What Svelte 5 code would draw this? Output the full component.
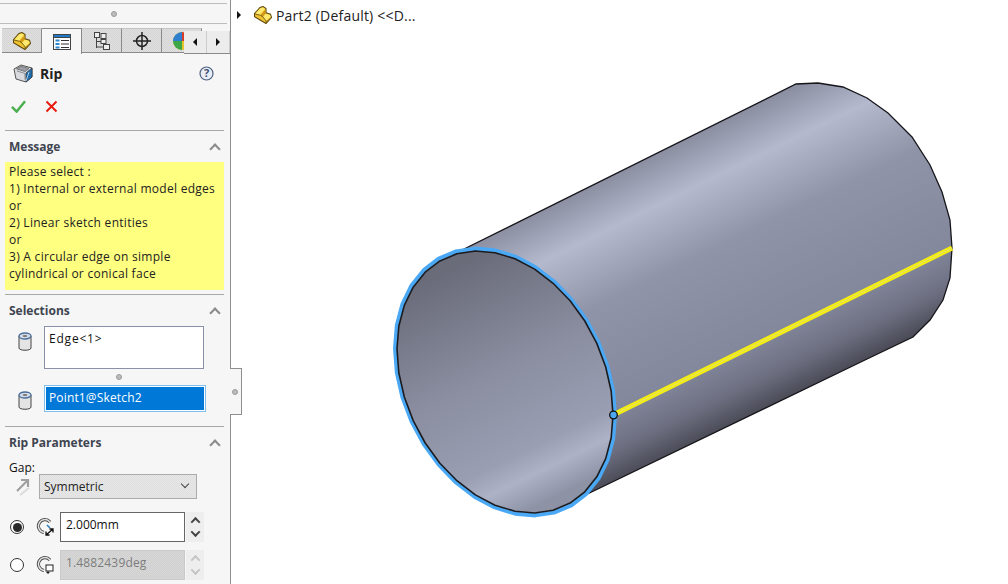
<script lang="ts">
const tabIcons = ["part", "props", "config", "target", "sphere"];
const messageLines = [
	"Please select :",
	"1) Internal or external model edges",
	"or",
	"2) Linear sketch entities",
	"or",
	"3) A circular edge on simple",
	"cylindrical or conical face"
];

// the open end of the tube is an ellipse cut into facets, like the tessellated model
const FACETS = 34;
const front = Array.from({ length: FACETS }, (_, i) => {
	const t = (i / FACETS) * Math.PI * 2;
	const x = 505 + 108 * Math.cos(t);
	const y = 382 + 131 * Math.sin(t + 0.255);
	return `${x.toFixed(1)},${y.toFixed(1)}`;
}).join(" ");

const backEdge =
	"452,255 796,84 818,83 843,87 867,98 888,113 912,137 930,165 942,192 950,220 952,248 950,278 943,300 930,320 913,337 865,360 575,500";
</script>

<div class="app">
	<aside class="panel">
		<div class="grip"><span class="dot"></span></div>

		<div class="tabs">
			{#each tabIcons as icon, i}
				<div class="tab" class:active={i === 1}>
					{#if icon === "part"}
						<svg width="18" height="18" viewBox="0 0 18 18"><use href="#part-icon" /></svg>
					{:else if icon === "props"}
						<svg width="18" height="18" viewBox="0 0 18 18">
							<rect x=".5" y="1.500" width="17" height="15" fill="#fff" stroke="#444" />
							<rect x=".5" y="1.500" width="17" height="3" fill="#1f78c8" stroke="#444" />
							<path d="M2.500 6.500h4v2h-4zM2.500 10h4v2h-4zM2.500 13.500h4v2h-4z" fill="#2a86d0" />
							<path d="M8 7.500h8M8 11h8M8 14.500h8" stroke="#333" stroke-width="1.200" />
						</svg>
					{:else if icon === "config"}
						<svg width="18" height="18" viewBox="0 0 18 18" fill="#eee" stroke="#444">
							<path d="M3.500 5v11M3.500 9.500H8M3.500 15H10" fill="none" />
							<rect x="1.500" y=".5" width="5" height="5" />
							<rect x="8" y="1.500" width="5" height="5" />
							<rect x="8" y="7.500" width="5" height="4" />
							<rect x="10.500" y="12.500" width="6" height="5" />
						</svg>
					{:else if icon === "target"}
						<svg width="18" height="18" viewBox="0 0 18 18" fill="none" stroke="#222" stroke-width="1.500">
							<circle cx="9" cy="9" r="5.500" />
							<path d="M9 0v18M0 9h18" />
						</svg>
					{:else}
						<svg width="18" height="18" viewBox="0 0 18 18">
							<circle cx="9" cy="9" r="9" fill="#e6c52a" />
							<path d="M9 9V0a9 9 0 0 1 9 9z" fill="#d83a2c" />
							<path d="M9 9H0a9 9 0 0 0 9 9z" fill="#3fa648" />
							<path d="M9 9V0A9 9 0 0 0 0 9z" fill="#2e7fd0" />
						</svg>
					{/if}
				</div>
			{/each}
			<div class="tab-nav">
				<button type="button"><span class="tri left"></span></button>
				<button type="button"><span class="tri right"></span></button>
			</div>
		</div>

		<div class="title-row">
			<svg class="rip-icon" width="20" height="20" viewBox="0 0 20 20">
				<path d="M1 6l7-4 11 3v9l-6 5-10-3z" fill="#d8dadf" stroke="#555" />
				<path d="M3.500 5.800l4.500-2.500 8 2.200-4 3z" fill="#9a9ea6" stroke="#777" />
				<path d="M4 8l8 2.500v6" fill="none" stroke="#8a8d94" />
				<path d="M13 10l6-5v9l-6 5z" fill="#1f6fb0" stroke="#333" stroke-width=".7" />
				<path d="M13 18l3-9" stroke="#bcd6ea" stroke-width=".9" />
			</svg>
			<span class="title">Rip</span>
			<svg class="help" width="15" height="15" viewBox="0 0 15 15">
				<circle cx="7.500" cy="7.500" r="6.500" fill="#e9eef6" stroke="#4d5f7e" stroke-width="1.200" />
				<text x="7.500" y="11.300" text-anchor="middle">?</text>
			</svg>
		</div>

		<div class="actions">
			<svg width="15" height="14" viewBox="0 0 16 14">
				<path d="M1 8l5 5 9-11" fill="none" stroke="#4caf50" stroke-width="2.600" />
			</svg>
			<svg width="13" height="13" viewBox="0 0 13 13">
				<path d="M1.500 1.500l10 10M11.500 1.500l-10 10" fill="none" stroke="#e8180c" stroke-width="1.900" />
			</svg>
		</div>

		<section class="section message">
			<header><h2>Message</h2><span class="chev"></span></header>
			<div class="note">
				{#each messageLines as line}
					<div>{line}</div>
				{/each}
			</div>
		</section>

		<section class="section selections">
			<header><h2>Selections</h2><span class="chev"></span></header>
			<div class="sel-row first">
				<svg width="14" height="19" viewBox="0 0 14 19"><use href="#cyl-icon" /></svg>
				<div class="listbox">Edge&lt;1&gt;</div>
			</div>
			<div class="resize"><span class="dot"></span></div>
			<div class="sel-row">
				<svg width="14" height="19" viewBox="0 0 14 19"><use href="#cyl-icon" /></svg>
				<div class="listbox active"><span>Point1@Sketch2</span></div>
			</div>
		</section>

		<section class="section params">
			<header><h2>Rip Parameters</h2><span class="chev"></span></header>
			<div class="gap-label">Gap:</div>
			<div class="gap-row">
				<svg width="18" height="20" viewBox="0 0 18 20">
					<path d="M3 14L13 4M7 3h7v7" fill="none" stroke="#a0a0a0" stroke-width="2.200" />
					<path d="M6 18l9-7" stroke="#dcdcdc" stroke-width="2.200" />
				</svg>
				<div class="select">Symmetric<span class="select-chev"></span></div>
			</div>
			<div class="value-row">
				<span class="radio on"></span>
				<svg width="18" height="20" viewBox="0 0 18 20" fill="none">
					<path d="M14 5A6.500 6.500 0 1 0 8 15.500" stroke="#4a4a4a" stroke-width="3.200" />
					<path d="M14 5A6.500 6.500 0 1 0 8 15.500" stroke="#e6e6e6" stroke-width="1.400" />
					<path d="M11 8l3 3" stroke="#2a7fc4" stroke-width="1.600" />
					<path d="M10 18l7-6M13.500 18H10v-3.500M13.500 12H17v3.500" stroke="#111" stroke-width="1.300" />
				</svg>
				<div class="num">2.000mm</div>
				<div class="spin"><span class="up"></span><span class="down"></span></div>
			</div>
			<div class="value-row">
				<span class="radio"></span>
				<svg width="18" height="20" viewBox="0 0 18 20" fill="none">
					<path d="M14 5A6.500 6.500 0 1 0 8 15.500" stroke="#4a4a4a" stroke-width="3.200" />
					<path d="M14 5A6.500 6.500 0 1 0 8 15.500" stroke="#e6e6e6" stroke-width="1.400" />
					<rect x="10" y="10" width="7" height="6" fill="#fff" stroke="#222" />
					<path d="M12 16v3M10.500 17.500h3" stroke="#222" />
				</svg>
				<div class="num off">1.4882439deg</div>
				<div class="spin off"><span class="up"></span><span class="down"></span></div>
			</div>
		</section>

		<div class="splitter"><span class="dot"></span></div>
	</aside>

	<main class="canvas">
		<div class="tree">
			<span class="tree-arrow"></span>
			<svg width="18" height="18" viewBox="0 0 18 18"><use href="#part-icon" /></svg>
			<span>Part2 (Default) &lt;&lt;D...</span>
		</div>
		<svg class="model" width="1008" height="584" viewBox="0 0 1008 584">
			<defs>
				<linearGradient id="shell" gradientUnits="userSpaceOnUse" x1="620" y1="171" x2="742" y2="420">
					<stop offset="0" stop-color="#8a8ea0" />
					<stop offset=".17" stop-color="#b5b9ce" />
					<stop offset=".4" stop-color="#9094a8" />
					<stop offset=".76" stop-color="#84889c" />
					<stop offset=".9" stop-color="#6c6e80" />
					<stop offset="1" stop-color="#4a4b56" />
				</linearGradient>
				<linearGradient id="bore" gradientUnits="userSpaceOnUse" x1="450" y1="270" x2="560" y2="495">
					<stop offset="0" stop-color="#6a6c7a" />
					<stop offset=".45" stop-color="#8a8ea0" />
					<stop offset=".78" stop-color="#9a9eb2" />
					<stop offset=".88" stop-color="#aeb2c7" />
					<stop offset="1" stop-color="#8e92a5" />
				</linearGradient>
			</defs>
			<polygon points={backEdge} fill="url(#shell)" />
			<polyline points={backEdge} fill="none" stroke="#15151a" stroke-width="1.300" />
			<polygon class="edge-glow" points={front} />
			<polygon points={front} fill="url(#bore)" stroke="#1c1c20" stroke-width="1.600" stroke-linejoin="round" />
			<line x1="613" y1="415" x2="952" y2="248" stroke="#f4ee10" stroke-width="5" />
			<line x1="613" y1="415" x2="952" y2="248" stroke="#e2df70" stroke-width="1" />
			<circle cx="613.500" cy="415" r="3.800" fill="#4da6f0" stroke="#111" stroke-width="1.300" />
		</svg>
	</main>
</div>

<svg class="defs" width="0" height="0">
	<defs>
		<symbol id="part-icon" viewBox="0 0 18 18">
			<path d="M.5 7.500L6 1.500 9 .5l3 2v4.300l4.500 1.400 1 3.300L12 17.500 6 14 .5 10.700z" fill="#f0c22e" stroke="#5e4a10" stroke-width="1.100" />
			<path d="M1.500 7.500L6.300 2.300 9 1.500l2 1.300L6 9z" fill="#ffe96e" />
			<path d="M6.500 9.300L11.500 3.500v3.800L8.500 11z" fill="#cf9618" />
			<path d="M9 11l3-3.200 4 1.200.6 2L12 15z" fill="#ffe96e" />
			<path d="M12.500 15l4.500-3.700-.2.800-4.800 4.400z" fill="#a87c12" />
			<path d="M1 8l5.500 1.300L9 11l3.200 4-.2 2" fill="none" stroke="#5e4a10" stroke-width=".8" />
		</symbol>
		<symbol id="cyl-icon" viewBox="0 0 14 19">
			<path d="M1 4v12c0 3 12 3 12 0V4z" fill="#e4e4e4" stroke="#444" />
			<ellipse cx="7" cy="4" rx="6" ry="3" fill="#d4dde8" stroke="#4a6f9a" stroke-width="1.300" />
			<ellipse cx="7" cy="4" rx="2.400" ry="1.100" fill="#777" />
		</symbol>
	</defs>
</svg>

<style>
:global(body) {
	margin: 0;
	background: #fff;
	overflow: hidden;
}
.app {
	display: flex;
	width: 1008px;
	height: 584px;
	font-family: "Open Sans", "Noto Sans", sans-serif;
	font-size: 12px;
	color: #111;
	overflow: hidden;
}
.defs {
	position: absolute;
}
.panel {
	position: relative;
	z-index: 2;
	width: 230px;
	height: 584px;
	flex: none;
	background: #f6f6f6;
	border-right: 1px solid #8f8f8f;
}
.grip {
	display: flex;
	align-items: center;
	justify-content: center;
	height: 19px;
	margin: 3px 3px 4px 0;
	border-top: 1px solid #bdbdbd;
	border-bottom: 1px solid #bdbdbd;
}
.dot {
	display: block;
	width: 4px;
	height: 4px;
	border-radius: 50%;
	background: #bcbcbc;
	border: 1px solid #9a9a9a;
}

.tabs {
	position: relative;
	display: flex;
	height: 26px;
	padding-left: 2px;
	overflow: hidden;
}
.tab {
	display: flex;
	align-items: center;
	justify-content: center;
	width: 40px;
	flex: none;
	height: 25px;
	box-sizing: border-box;
	background: repeating-conic-gradient(#d4d4d4 0 25%, #e0e0e0 0 50%) 0 0 / 2px 2px;
	border-right: 1px solid #8a8a8a;
	border-bottom: 1px solid #8a8a8a;
	border-top: 1px solid #c4c4c4;
}
.tab.active {
	height: 26px;
	background: #f6f6f6;
	border-top: 1px solid #8a8a8a;
	border-bottom: none;
}
.tab-nav {
	position: absolute;
	top: 3px;
	left: 184px;
	display: flex;
	gap: 1px;
	height: 22px;
	background: #ccc;
	border-bottom: 1px solid #8a8a8a;
	padding-right: 2px;
}
.tab-nav button {
	width: 22px;
	padding: 0;
	border: none;
	background: #ececec;
	display: flex;
	align-items: center;
	justify-content: center;
}
.tri {
	width: 0;
	height: 0;
	border-top: 4px solid transparent;
	border-bottom: 4px solid transparent;
}
.tri.left {
	border-right: 4px solid #111;
}
.tri.right {
	border-left: 4px solid #111;
}

.title-row {
	display: flex;
	align-items: center;
	height: 20px;
	margin-top: 9px;
	padding: 0 16px 0 13px;
}
.rip-icon {
	margin-right: 7px;
}
.title {
	font-size: 14px;
	font-weight: 700;
	flex: 1;
	color: #222;
}
.help text {
	font: 700 11px "Open Sans", sans-serif;
	fill: #3d4f70;
}
.actions {
	display: flex;
	align-items: center;
	gap: 19px;
	height: 18px;
	margin-top: 14px;
	padding-left: 11px;
}

.section {
	margin: 0 6px 0 5px;
	border-top: 1px solid #a8a8a8;
}
.section header {
	display: flex;
	align-items: center;
	justify-content: space-between;
	height: 31px;
	padding: 0 5px 0 4px;
}
.section h2 {
	margin: 0;
	font-size: 12px;
	font-weight: 700;
	color: #404550;
}
.chev {
	width: 6px;
	height: 6px;
	margin-top: 5px;
	border-left: 2px solid #8a8a8a;
	border-top: 2px solid #8a8a8a;
	transform: rotate(45deg);
}
.message {
	margin-top: 15px;
}
.note {
	height: 128px;
	margin-bottom: 4px;
	padding: 1px 0 0 4px;
	box-sizing: border-box;
	background: #ffff80;
	line-height: 17px;
	letter-spacing: 0.28px;
	color: #222;
}

.sel-row {
	display: flex;
	align-items: flex-start;
	padding-left: 13px;
	gap: 12px;
}
.sel-row svg {
	margin-top: 6px;
}
.listbox {
	width: 160px;
	height: 43px;
	box-sizing: border-box;
	padding: 3px 4px;
	background: #fff;
	border: 1px solid #8a90a8;
	letter-spacing: 0.8px;
}
.listbox.active {
	width: 162px;
	height: 27px;
	padding: 0;
	border: 1px solid #7fc0f0;
	background: #fff;
	letter-spacing: 0.15px;
}
.listbox.active span {
	display: block;
	height: 23px;
	margin: 1px;
	padding-left: 3px;
	line-height: 22px;
	background: #0078d7;
	color: #fff;
}
.resize {
	display: flex;
	justify-content: center;
	align-items: center;
	height: 16px;
	margin-left: 28px;
	margin-right: 20px;
}
.selections {
	padding-bottom: 14px;
}

.gap-label {
	padding-left: 4px;
	height: 17px;
	line-height: 17px;
	margin-top: 1px;
}
.gap-row {
	display: flex;
	align-items: center;
	gap: 16px;
	padding-left: 9px;
	margin-top: -2px;
}
.select {
	position: relative;
	width: 158px;
	height: 25px;
	margin-left: -9px;
	box-sizing: border-box;
	padding-left: 4px;
	line-height: 24px;
	background: repeating-conic-gradient(#dedede 0 25%, #e8e8e8 0 50%) 0 0 / 2px 2px;
	border: 1px solid #ababab;
	color: #222;
}
.select-chev {
	position: absolute;
	right: 8px;
	top: 6px;
	width: 5px;
	height: 5px;
	border-right: 1px solid #444;
	border-bottom: 1px solid #444;
	transform: rotate(45deg);
}
.value-row {
	display: flex;
	align-items: center;
	height: 30px;
	margin-top: 8px;
	padding-left: 5px;
}
.gap-row + .value-row {
	margin-top: 13px;
}
.radio {
	width: 12px;
	height: 12px;
	border: 1px solid #333;
	border-radius: 50%;
	background: #fff;
	margin-right: 12px;
	flex: none;
	position: relative;
}
.radio.on::after {
	content: "";
	position: absolute;
	inset: 1.500px;
	border-radius: 50%;
	background: #2a2a2a;
}
.num {
	width: 125px;
	height: 30px;
	box-sizing: border-box;
	margin-left: 6px;
	padding-left: 5px;
	line-height: 24px;
	background: #fff;
	border: 1px solid #666;
}
.num.off {
	background: repeating-conic-gradient(#cfcfcf 0 25%, #d8d8d8 0 50%) 0 0 / 2px 2px;
	border: 1px solid #cacaca;
	color: #7d7d7d;
	letter-spacing: 0.15px;
}
.spin {
	display: flex;
	flex-direction: column;
	align-items: center;
	justify-content: space-evenly;
	width: 18px;
	height: 30px;
	margin-left: 1px;
	background: #eee;
}
.spin span {
	width: 5px;
	height: 5px;
	border-left: 2px solid #444;
	border-top: 2px solid #444;
}
.spin .up {
	transform: rotate(45deg) translate(1px, 1px);
}
.spin .down {
	transform: rotate(225deg) translate(1px, 1px);
}
.spin.off span {
	border-color: #c4c4c4;
}

.splitter {
	position: absolute;
	left: 230px;
	top: 368px;
	width: 12px;
	height: 47px;
	display: flex;
	align-items: center;
	padding-left: 2px;
	box-sizing: border-box;
	background: #f6f6f6;
	border: 1px solid #8f8f8f;
	border-left: none;
}

.canvas {
	position: relative;
	flex: 1;
	background: #fff;
}
.tree {
	position: relative;
	z-index: 1;
	display: flex;
	align-items: center;
	height: 18px;
	margin-top: 6px;
	padding-left: 6px;
	font-size: 14px;
	letter-spacing: 0.2px;
	color: #222;
}
.tree-arrow {
	width: 0;
	height: 0;
	margin-right: 13px;
	border-top: 4px solid transparent;
	border-bottom: 4px solid transparent;
	border-left: 4px solid #111;
}
.tree svg {
	margin-right: 4px;
}
.model {
	position: absolute;
	left: -231px;
	top: 0;
}
.edge-glow {
	fill: none;
	stroke: #4aa8f4;
	stroke-width: 4;
	stroke-linejoin: round;
	transform-origin: 505px 382px;
	transform: scale(1.018);
}
</style>
